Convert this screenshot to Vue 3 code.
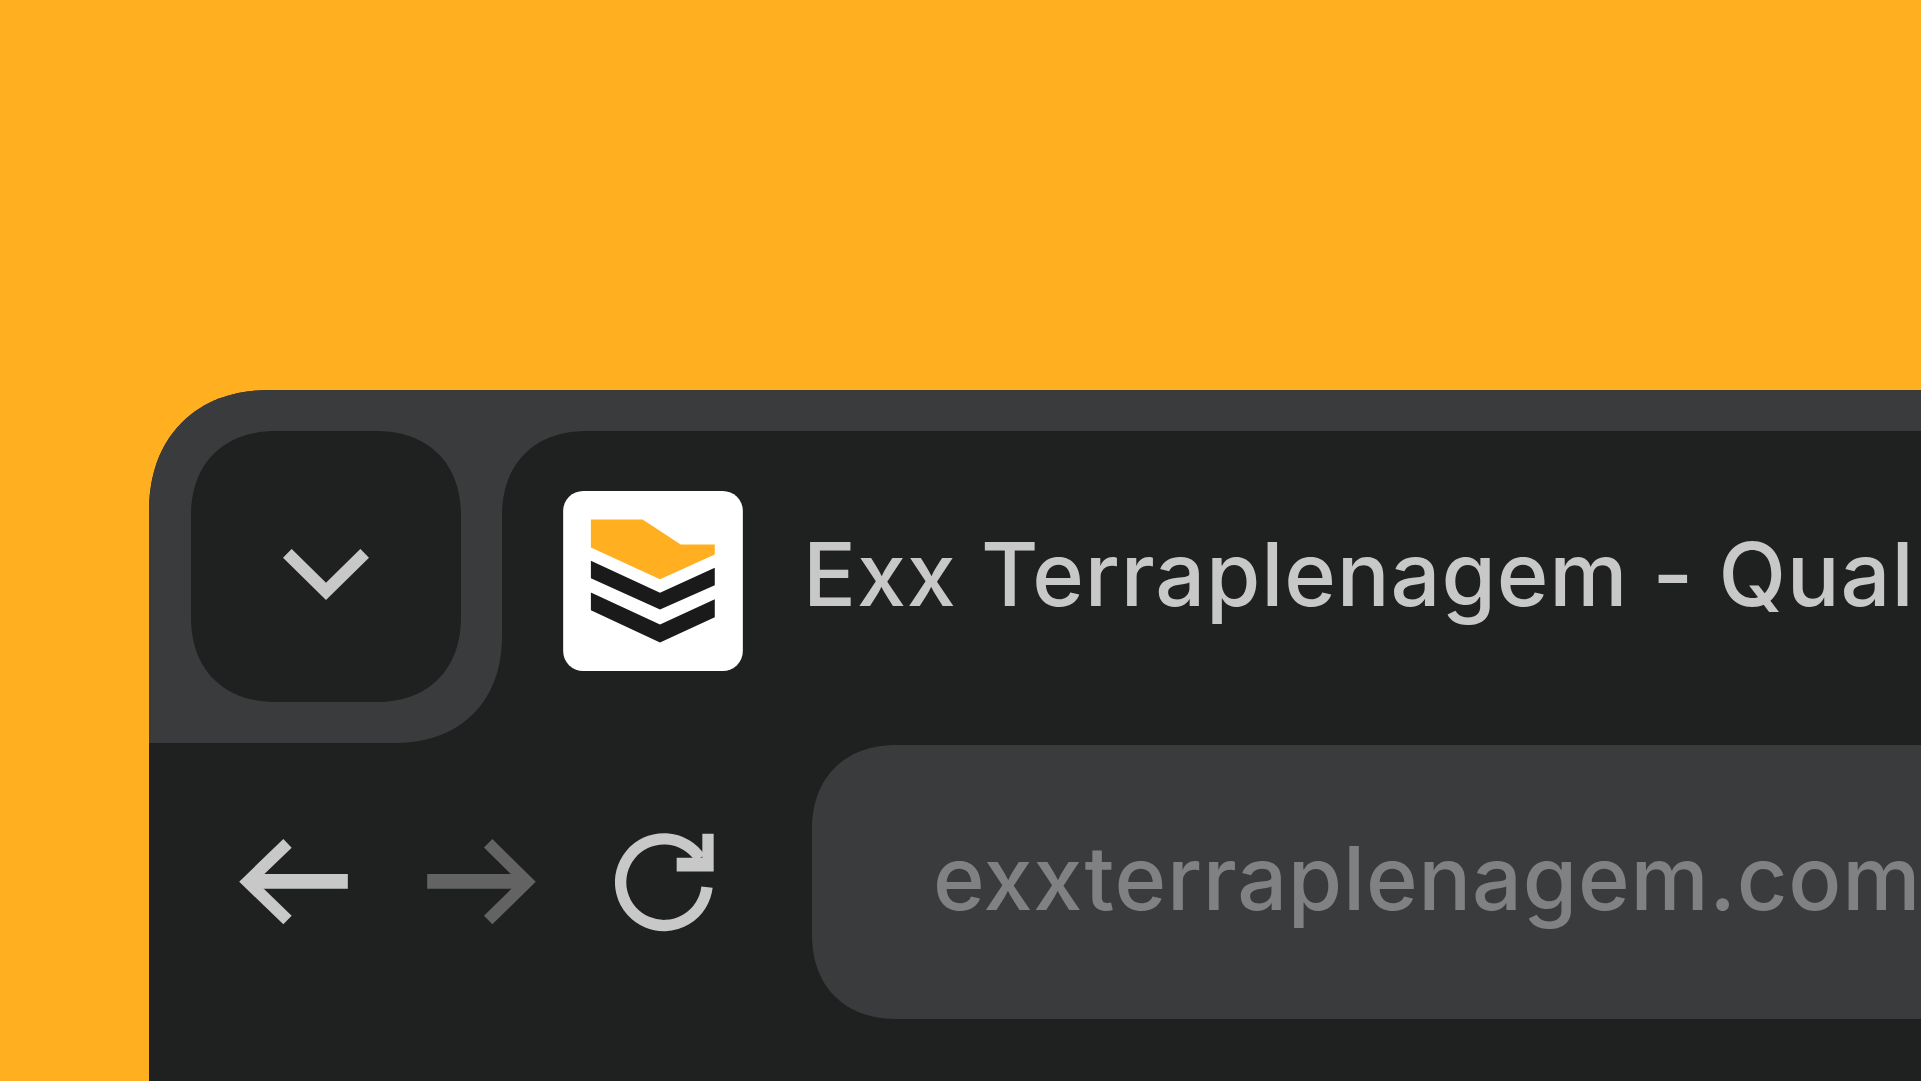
<script setup>
const logoShapes = [
  { points: '153,148 308,148 422,223 524,223 524,253 360,327 153,232', fill: '#ffaf20' },
  { points: '153,272 360,368 524,293 524,345 360,418 153,324', fill: '#1a1a1a' },
  { points: '153,367 360,463 524,387 524,441 360,517 153,420', fill: '#1a1a1a' },
]
</script>

<template>
  <div class="page">
    <div class="window">
      <div class="top-row">
        <div class="side">
          <button class="menu" type="button" aria-label="Tabs">
            <svg class="chevron" viewBox="459 537 258 153">
              <path d="M472 550 L588 664 L704 550" fill="none" stroke="#c8c8c8" stroke-width="37" />
            </svg>
          </button>
        </div>
        <div class="tab-wrap">
          <div class="tab">
            <svg class="favicon" viewBox="70 63 538 539">
              <rect x="70" y="63" width="538" height="539" rx="60" fill="#fff" />
              <polygon v-for="s in logoShapes" :key="s.points" :points="s.points" :fill="s.fill" />
            </svg>
            <span class="title">Exx Terraplenagem - Qual</span>
          </div>
        </div>
      </div>
      <div class="nav-row">
        <div class="nav-icons">
          <svg class="arrow" viewBox="58 117 326 258">
            <path d="M384 244 H100" fill="none" stroke="#c8c8c8" stroke-width="44" />
            <path d="M203 130 L84 245 L203 360" fill="none" stroke="#c8c8c8" stroke-width="36" />
          </svg>
          <svg class="arrow fwd" viewBox="621 117 326 258">
            <path d="M621 244 H905" fill="none" stroke="#636363" stroke-width="44" />
            <path d="M804 130 L921 245 L804 360" fill="none" stroke="#636363" stroke-width="36" />
          </svg>
          <svg class="reload" viewBox="1185 98 297 296">
            <path d="M1461 260 A130 130 0 1 1 1440 173" fill="none" stroke="#c8c8c8" stroke-width="34" />
            <polygon points="1447,100 1481,100 1481,213 1370,213 1370,172 1447,172" fill="#c8c8c8" />
          </svg>
        </div>
        <div class="url-bar">
          <span class="url">exxterraplenagem.com</span>
        </div>
      </div>
    </div>
  </div>
</template>

<style>
html, body { margin: 0; background: #ffaf20; }
</style>

<style scoped>
.page {
  width: 1921px;
  height: 1081px;
  overflow: hidden;
  background: #ffaf20;
  padding: 390px 0 0 149px;
  box-sizing: border-box;
  font-family: Inter, "Noto Sans", sans-serif;
}
.window {
  width: 1772px;
  height: 691px;
  background: #1f2120;
  border-top-left-radius: 122px;
  corner-shape: superellipse(1.15);
  overflow: hidden;
}
.top-row { display: flex; height: 353px; }
.side {
  width: 353px;
  flex: none;
  box-sizing: border-box;
  padding: 41px 0 0 42px;
  background: #3a3b3d;
  border-bottom-right-radius: 108px;
  corner-shape: superellipse(1.15);
}
.menu {
  width: 270px;
  height: 271px;
  padding: 16px 0 0;
  border: 0;
  background: #1f2120;
  border-radius: 85px;
  corner-shape: superellipse(1.15);
  display: flex;
  align-items: center;
  justify-content: center;
}
.chevron { width: 86px; height: 51px; }
.tab-wrap { flex: 1; min-width: 0; padding-top: 41px; background: #3a3b3d; }
.tab {
  height: 312px;
  box-sizing: border-box;
  padding: 60px 0 0 61px;
  background: #1f2120;
  border-top-left-radius: 85px;
  corner-shape: superellipse(1.15);
  display: flex;
  gap: 60px;
  white-space: nowrap;
}
.favicon { width: 180px; height: 180px; flex: none; }
.title {
  font-size: 88px;
  font-weight: 500;
  letter-spacing: 0.83px;
  line-height: 108px;
  color: #c8c8c8;
  padding-top: 29px;
  filter: blur(0.5px);
}
.nav-row {
  display: flex;
  align-items: flex-start;
  padding: 2px 0 0 90px;
}
.nav-icons {
  display: flex;
  align-items: center;
  gap: 79px;
  width: 573px;
  height: 274px;
  flex: none;
  white-space: nowrap;
}
.arrow { width: 109px; height: 86px; flex: none; }
.reload { width: 99px; height: 99px; flex: none; }
.url-bar {
  flex: 1;
  height: 274px;
  background: #3a3b3d;
  border-top-left-radius: 85px;
  border-bottom-left-radius: 85px;
  corner-shape: superellipse(1.15);
  box-sizing: border-box;
  padding: 0 0 8px 121px;
  display: flex;
  align-items: center;
  white-space: nowrap;
  overflow: hidden;
}
.url {
  font-size: 88px;
  font-weight: 500;
  letter-spacing: 0.74px;
  color: #808183;
  filter: blur(0.5px);
}
</style>
